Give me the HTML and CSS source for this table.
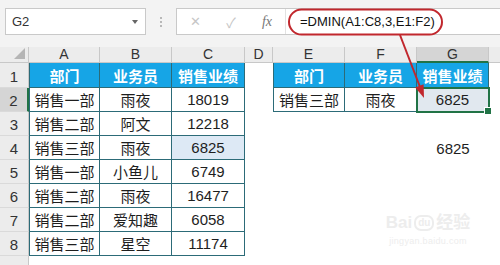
FILE: index.html
```html
<!DOCTYPE html>
<html lang="zh-CN">
<head>
<meta charset="utf-8">
<title>DMIN</title>
<link rel="stylesheet" href="styles.css">
</head>
<body>
<div class="app">
  <div class="toolbar">
    <div class="namebox"><span>G2</span><i class="caret"></i></div>
    <div class="grip"><i></i><i></i><i></i></div>
    <div class="fbar">
      <div class="fbtns">
        <span class="fb x">✕</span>
        <span class="fb ok">✓</span>
        <span class="fb fx">fx</span>
      </div>
      <div class="finput">=DMIN(A1:C8,3,E1:F2)</div>
    </div>
  </div>

  <div class="sheet">
    <div class="ch corner"><i class="tri"></i></div>
    <div class="ch">A</div><div class="ch">B</div><div class="ch">C</div><div class="ch">D</div>
    <div class="ch">E</div><div class="ch">F</div><div class="ch sel">G</div><div class="ch last"></div>

    <div class="rh">1</div>
    <div class="c th first">部门</div><div class="c th">业务员</div><div class="c th">销售业绩</div><div class="c"></div>
    <div class="c th first">部门</div><div class="c th">业务员</div><div class="c th">销售业绩</div><div class="c"></div>

    <div class="rh sel">2</div>
    <div class="c td first">销售一部</div><div class="c td">雨夜</div><div class="c td">18019</div><div class="c"></div>
    <div class="c td first">销售三部</div><div class="c td">雨夜</div><div class="c td active">6825</div><div class="c"></div>

    <div class="rh">3</div>
    <div class="c td first">销售二部</div><div class="c td">阿文</div><div class="c td">12218</div><div class="c"></div>
    <div class="c"></div><div class="c"></div><div class="c"></div><div class="c"></div>

    <div class="rh">4</div>
    <div class="c td first">销售三部</div><div class="c td">雨夜</div><div class="c td hl">6825</div><div class="c"></div>
    <div class="c"></div><div class="c"></div><div class="c">6825</div><div class="c"></div>

    <div class="rh">5</div>
    <div class="c td first">销售一部</div><div class="c td">小鱼儿</div><div class="c td">6749</div><div class="c"></div>
    <div class="c"></div><div class="c"></div><div class="c"></div><div class="c"></div>

    <div class="rh">6</div>
    <div class="c td first">销售二部</div><div class="c td">雨夜</div><div class="c td">16477</div><div class="c"></div>
    <div class="c"></div><div class="c"></div><div class="c"></div><div class="c"></div>

    <div class="rh">7</div>
    <div class="c td first">销售二部</div><div class="c td">爱知趣</div><div class="c td">6058</div><div class="c"></div>
    <div class="c"></div><div class="c"></div><div class="c"></div><div class="c"></div>

    <div class="rh">8</div>
    <div class="c td first">销售三部</div><div class="c td">星空</div><div class="c td">11174</div><div class="c"></div>
    <div class="c"></div><div class="c"></div><div class="c"></div><div class="c"></div>

    <div class="rh"></div>
  </div>

  <!-- callout ring round the formula and the arrow down to the result cell -->
  <svg class="callout" width="500" height="265" viewBox="0 0 500 265">
    <rect x="289" y="9.5" width="153" height="25" rx="12.5" fill="none" stroke="#c1272d" stroke-width="2"/>
    <line x1="400" y1="35" x2="420" y2="87" stroke="#c1272d" stroke-width="2"/>
    <polygon points="424,98 415.2,87.4 423.6,84.2" fill="#c1272d"/>
  </svg>

  <div class="mark">
    <div class="mark-top">Bai<span class="paw">du</span>经验</div>
    <div class="mark-url">jingyan.baidu.com</div>
  </div>
</div>
</body>
</html>
```

FILE: styles.css
```css
* { box-sizing: border-box; }

html, body {
  margin: 0;
  padding: 0;
  background: #fff;
}

.app {
  position: relative;
  width: 500px;
  height: 265px;
  overflow: hidden;
  font-family: "Liberation Sans", "Noto Sans CJK SC", sans-serif;
  color: #222;
}

/* ---------- formula toolbar ---------- */
.toolbar {
  height: 47px;
  background: #f3f3f3;
  display: flex;
  align-items: flex-start;
  padding: 8px 0 0 5px;
}

.namebox {
  width: 141px;
  height: 27px;
  background: #fff;
  border: 1px solid #c9c9c9;
  display: flex;
  align-items: center;
  justify-content: space-between;
  padding: 0 7px 0 6px;
  font-size: 13px;
  color: #333;
}

.caret {
  width: 0;
  height: 0;
  border-left: 3.5px solid transparent;
  border-right: 3.5px solid transparent;
  border-top: 4px solid #666;
}

.grip {
  width: 30px;
  height: 27px;
  display: flex;
  flex-direction: column;
  align-items: center;
  justify-content: center;
  gap: 2px;
}
.grip i {
  width: 2px;
  height: 2px;
  background: #b8b8b8;
}

.fbar {
  flex: 1;
  height: 27px;
  display: flex;
  background: #fff;
  border: 1px solid #c9c9c9;
  border-right: 0;
}

.fbtns {
  width: 109px;
  display: flex;
  align-items: center;
  border-right: 1px solid #e2e2e2;
}

.fb {
  flex: 1;
  text-align: center;
  color: #c6c6c6;
  font-size: 14px;
}
.fb.x { font-size: 13px; }
.fb.fx {
  font-family: "Liberation Serif", serif;
  font-style: italic;
  color: #777;
  font-size: 14px;
}

.finput {
  flex: 1;
  display: flex;
  align-items: center;
  padding-left: 14px;
  font-size: 13px;
  color: #111;
}

/* ---------- worksheet ---------- */
.sheet {
  display: grid;
  grid-template-columns: 29px 71px 72px 73px 28px 72px 72px 72px 11px;
  grid-template-rows: 16px 25px repeat(7, 24px) 24px;
}

.ch {
  background: #ececec;
  border-right: 1px solid #c8c8c8;
  border-bottom: 1px solid #c8c8c8;
  font-size: 14px;
  line-height: 15px;
  text-align: center;
  color: #333;
}
.ch.sel {
  background: #d5d5d5;
  border-bottom: 2px solid #217346;
}
.ch.last { border-right: 0; }

.corner {
  position: relative;
}
.tri {
  position: absolute;
  right: 3px;
  bottom: 3px;
  width: 0;
  height: 0;
  border-left: 11px solid transparent;
  border-bottom: 11px solid #b5b5b5;
}

.rh {
  background: #ececec;
  border-right: 1px solid #c8c8c8;
  border-bottom: 1px solid #dadada;
  display: flex;
  align-items: flex-end;
  justify-content: center;
  padding-bottom: 2px;
  font-size: 15px;
  color: #333;
}
.rh.sel {
  background: #d5d5d5;
  border-right: 2px solid #217346;
}

.c {
  display: flex;
  align-items: center;
  justify-content: center;
  font-size: 15px;
  color: #1e1e1e;
  position: relative;
}

.th, .td {
  border-right: 1px solid #2c6b78;
  border-bottom: 1px solid #2c6b78;
}
.first { border-left: 1px solid #2c6b78; }

.th {
  background: #16a5e6;
  color: #fff;
  font-weight: bold;
  font-size: 15px;
}

.td.hl { background: #dde9f5; }

.td.active {
  background: #e1e8ef;
  outline: 2px solid #217346;
  outline-offset: -1px;
}
.td.active::after {
  content: "";
  position: absolute;
  right: -4px;
  bottom: -4px;
  width: 6px;
  height: 6px;
  background: #217346;
  border: 1px solid #fff;
}

/* ---------- overlays ---------- */
.callout {
  position: absolute;
  left: 0;
  top: 0;
  pointer-events: none;
}

.mark {
  position: absolute;
  left: 384px;
  top: 212px;
  width: 88px;
  color: #ededed;
  text-align: center;
  white-space: nowrap;
}
.mark-top {
  font-size: 17px;
  font-weight: bold;
  line-height: 22px;
}
.paw {
  display: inline-block;
  border: 2px solid #ededed;
  border-radius: 7px;
  font-size: 10px;
  line-height: 12px;
  padding: 0 2px;
  margin: 0 2px;
  vertical-align: 2px;
}
.mark-url {
  font-size: 9px;
  line-height: 14px;
  letter-spacing: 0.3px;
}
```
